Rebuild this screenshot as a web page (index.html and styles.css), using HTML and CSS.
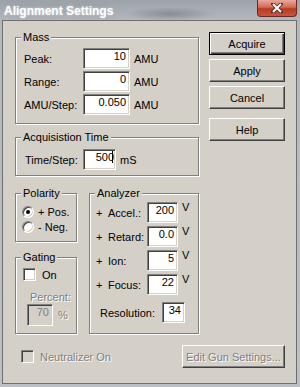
FILE: index.html
```html
<!DOCTYPE html>
<html lang="en">
<head>
    <meta charset="UTF-8">
    <title>Alignment Settings</title>
    <link rel="stylesheet" href="styles.css">
</head>
<body>
    <div class="window">
        <div class="titlebar">
            <span class="title">Alignment Settings</span>
            <span class="close">
                <svg width="12" height="10" viewBox="0 0 12 10">
                    <path d="M2 1 L10 9 M10 1 L2 9" stroke="#4a2a22" stroke-width="3.6" stroke-linecap="square"/>
                    <path d="M2 1 L10 9 M10 1 L2 9" stroke="#fff" stroke-width="2"/>
                </svg>
            </span>
        </div>
        <div class="client">
            <div class="main">
                <div class="groups">
                    <!-- Mass -->
                    <div class="group mass">
                        <span class="legend">Mass</span>
                        <div class="row"><label>Peak:</label><span class="edit w47">10</span><span class="unit">AMU</span></div>
                        <div class="row"><label>Range:</label><span class="edit w47">0</span><span class="unit">AMU</span></div>
                        <div class="row"><label>AMU/Step:</label><span class="edit w47">0.050</span><span class="unit">AMU</span></div>
                    </div>
                    <!-- Acquisition Time -->
                    <div class="group acq">
                        <span class="legend">Acquisistion Time</span>
                        <div class="row"><label>Time/Step:</label><span class="edit w33">500<span class="caret"></span></span><span class="unit">mS</span></div>
                    </div>
                    <div class="lower">
                        <div class="col">
                            <div class="group polarity">
                                <span class="legend">Polarity</span>
                                <div class="opt"><span class="radio checked"></span><span>+ Pos.</span></div>
                                <div class="opt"><span class="radio"></span><span>- Neg.</span></div>
                            </div>
                            <div class="group gating">
                                <span class="legend">Gating</span>
                                <div class="opt"><span class="check"></span><span class="on">On</span></div>
                                <div class="percent-label disabled">Percent:</div>
                                <div class="row percent"><span class="edit w26 off">70</span><span class="unit disabled">%</span></div>
                            </div>
                        </div>
                        <!-- Analyzer -->
                        <div class="group analyzer">
                            <span class="legend">Analyzer</span>
                            <div class="arow"><label><span class="sign">+</span>Accel.:</label><span class="edit w31">200</span><span class="volt">V</span></div>
                            <div class="arow"><label><span class="sign">+</span>Retard:</label><span class="edit w31">0.0</span><span class="volt">V</span></div>
                            <div class="arow"><label><span class="sign">+</span>Ion:</label><span class="edit w31">5</span><span class="volt">V</span></div>
                            <div class="arow"><label><span class="sign">+</span>Focus:</label><span class="edit w31">22</span><span class="volt">V</span></div>
                            <div class="arow res"><label>Resolution:</label><span class="edit w23">34</span></div>
                        </div>
                    </div>
                </div>
                <div class="buttons">
                    <button class="btn default">Acquire</button>
                    <button class="btn">Apply</button>
                    <button class="btn">Cancel</button>
                    <button class="btn help">Help</button>
                </div>
            </div>
            <div class="footer">
                <span class="check off"></span>
                <span class="neutral disabled">Neutralizer On</span>
                <button class="btn gun disabled">Edit Gun Settings...</button>
            </div>
        </div>
    </div>
</body>
</html>
```

FILE: styles.css
```css
body {
    margin: 0;
    font-family: "Liberation Sans", Arial, sans-serif;
    font-size: 11px;
    color: #000;
}

.window {
    width: 300px;
    height: 387px;
    display: flex;
    flex-direction: column;
    background:
        radial-gradient(ellipse 45px 7px at 170px 14px, rgba(70, 74, 82, 0.35), transparent),
        linear-gradient(#9ca3a9, #b3b8bd 20px, #bcc0c4);
}

.titlebar {
    height: 20px;
    display: flex;
    justify-content: space-between;
    align-items: flex-start;
    padding: 0 3px 0 4px;
}

.title {
    color: #fff;
    font-weight: bold;
    font-size: 12px;
    line-height: 22px;
    text-shadow: 0 0 3px rgba(255, 255, 255, 0.7), 0 0 6px rgba(120, 124, 130, 0.6);
}

.close {
    width: 40px;
    height: 17px;
    box-sizing: border-box;
    border: 1px solid #6a2a20;
    border-top: none;
    border-radius: 0 0 4px 4px;
    background: linear-gradient(#e7a99b, #d36a55 45%, #b93a24 55%, #c8563c);
    display: flex;
    align-items: center;
    justify-content: center;
}

.client {
    flex: 1;
    margin: 0 3px 3px 2px;
    border: 1px solid #6c7074;
    background: #d4d0c8;
}

.main {
    display: flex;
    align-items: flex-start;
    gap: 10px;
    padding: 11px 0 0 12px;
}

.groups {
    width: 184px;
    margin-top: 5px;
    display: flex;
    flex-direction: column;
}

/* etched group box */
.group {
    position: relative;
    box-sizing: border-box;
    border: 1px solid #808080;
    box-shadow: inset 1px 1px #fff, 1px 1px #fff;
}

.legend {
    position: absolute;
    top: -7px;
    left: 5px;
    padding: 0 2px;
    line-height: 13px;
    background: #d4d0c8;
}

.row {
    display: flex;
    align-items: center;
    height: 21px;
}

.row label {
    width: 59px;
}

.edit {
    display: block;
    box-sizing: border-box;
    height: 21px;
    padding-right: 3px;
    line-height: 14px;
    text-align: right;
    background: #fff;
    border: 1px solid;
    border-color: #808080 #fff #fff #808080;
    box-shadow: inset 1px 1px #404040, inset -1px -1px #d4d0c8;
}

.w47 { width: 47px; }
.w33 { width: 33px; padding-right: 2px; }
.w31 { width: 31px; }
.w26 { width: 26px; height: 22px; }
.w23 { width: 23px; }

.caret {
    display: inline-block;
    width: 1px;
    height: 12px;
    margin-left: -2px;
    vertical-align: -2px;
    background: #000;
}

.unit {
    margin-left: 4px;
}

.mass {
    height: 87px;
    padding: 10px 0 0 8px;
    display: flex;
    flex-direction: column;
    gap: 2px;
}

.acq {
    margin-top: 13px;
    height: 39px;
    padding: 11px 0 0 9px;
}

.acq .row label {
    width: 58px;
}

.lower {
    margin-top: 17px;
    display: flex;
    gap: 12px;
}

.col {
    width: 62px;
    display: flex;
    flex-direction: column;
    gap: 15px;
}

.polarity {
    height: 49px;
    padding: 11px 0 0 6px;
    display: flex;
    flex-direction: column;
    gap: 2px;
}

.opt {
    display: flex;
    align-items: center;
    height: 13px;
}

.radio {
    position: relative;
    width: 12px;
    height: 12px;
    margin-right: 4px;
    box-sizing: border-box;
    border-radius: 50%;
    background: #fff;
    border: 1px solid;
    border-color: #808080 #fff #fff #808080;
    box-shadow: inset 1px 1px #404040, inset -1px -1px #d4d0c8;
}

.radio.checked::after {
    content: "";
    position: absolute;
    left: 3px;
    top: 3px;
    width: 4px;
    height: 4px;
    border-radius: 50%;
    background: #000;
}

.check {
    width: 13px;
    height: 13px;
    box-sizing: border-box;
    background: #fff;
    border: 1px solid;
    border-color: #808080 #fff #fff #808080;
    box-shadow: inset 1px 1px #404040, inset -1px -1px #d4d0c8;
}

.check.off {
    background: #d4d0c8;
}

.gating {
    height: 77px;
    padding: 10px 0 0 7px;
}

.on {
    margin-left: 6px;
}

.percent-label {
    margin: 10px 0 0 7px;
    line-height: 13px;
}

.percent {
    margin-left: 4px;
    height: 22px;
}

.percent .unit {
    margin-left: 5px;
}

.edit.off {
    background: #d4d0c8;
    color: #808080;
}

.disabled {
    color: #808080;
    text-shadow: 1px 1px #fff;
}

.analyzer {
    width: 110px;
    height: 141px;
    padding: 8px 0 0 6px;
    display: flex;
    flex-direction: column;
    gap: 3px;
}

.arow {
    display: flex;
    align-items: center;
    height: 21px;
}

.arow label {
    width: 51px;
}

.sign {
    display: inline-block;
    width: 12px;
}

.volt {
    align-self: flex-start;
    margin-left: 4px;
    line-height: 11px;
}

.arow.res {
    margin-top: 4px;
}

.arow.res label {
    width: 62px;
    margin-left: 4px;
}

.buttons {
    width: 76px;
    display: flex;
    flex-direction: column;
    gap: 4px;
}

.btn {
    height: 23px;
    padding: 0;
    font-family: inherit;
    font-size: 11px;
    color: #000;
    background: #d4d0c8;
    border: 1px solid;
    border-color: #fff #404040 #404040 #fff;
    box-shadow: inset -1px -1px #808080;
}

.btn.default {
    border-color: #000;
    box-shadow: inset 1px 1px #fff, inset -1px -1px #404040, inset -2px -2px #808080;
}

.btn.help {
    margin-top: 5px;
}

.footer {
    display: flex;
    align-items: center;
    padding: 11px 11px 0 18px;
}

.neutral {
    margin-left: 6px;
}

.btn.gun {
    margin-left: auto;
    width: 103px;
    color: #808080;
}
```
